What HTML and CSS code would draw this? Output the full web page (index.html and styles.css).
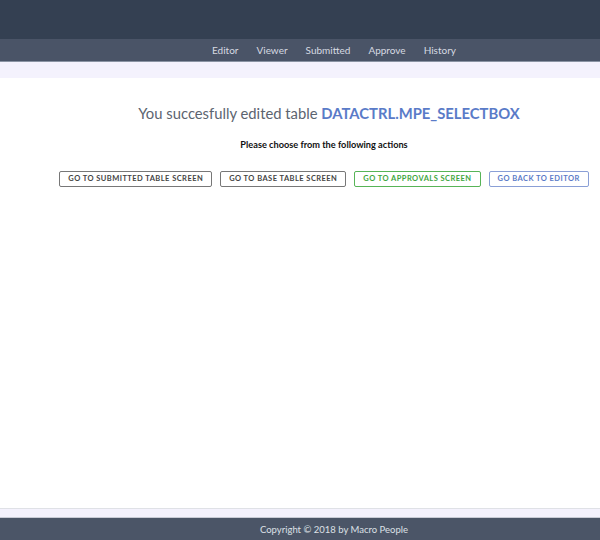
FILE: index.html
```html
<!DOCTYPE html>
<html>
<head>
<meta charset="utf-8">
<link rel="stylesheet" href="styles.css">
</head>
<body>
<div class="page">
  <header class="top"></header>
  <nav class="nav">
    <a>Editor</a><a>Viewer</a><a>Submitted</a><a>Approve</a><a>History</a>
  </nav>
  <div class="band"></div>
  <main class="main">
    <h1 class="title">You succesfully edited table <span class="tbl">DATACTRL.MPE_SELECTBOX</span></h1>
    <p class="sub">Please choose from the following actions</p>
    <div class="actions">
      <button class="btn">GO TO SUBMITTED TABLE SCREEN</button>
      <button class="btn">GO TO BASE TABLE SCREEN</button>
      <button class="btn green">GO TO APPROVALS SCREEN</button>
      <button class="btn blue">GO BACK TO EDITOR</button>
    </div>
  </main>
  <div class="fband"></div>
  <footer class="footer">Copyright © 2018 by Macro People</footer>
</div>
</body>
</html>
```
FILE: styles.css
```css
html, body { margin: 0; padding: 0; }
body { font-family: Lato, "Open Sans", sans-serif; background: #fff; }
.page { display: flex; flex-direction: column; height: 540px; }
.top { height: 39px; background: #344052; }
.nav { height: 22px; background: #4a5467; border-bottom: 1px solid #8a93a3; display: flex; justify-content: center; align-items: center; gap: 0; padding-left: 68px; }
.nav a { color: #d6dae2; font-size: 10px; margin: 0 9px; }
.band { height: 16px; background: #f4f2fd; }
.main { flex: 1; padding-left: 58px; padding-right: 10px; text-align: center; }
.title { margin: 25px 0 0; padding-left: 10px; font-size: 14.8px; font-weight: 400; color: #5c6470; line-height: 20px; }
.tbl { color: #5a7bc8; font-weight: 700; }
.sub { margin: 16px 0 0; font-size: 9.2px; font-weight: 700; color: #111; line-height: 12px; }
.actions { display: flex; justify-content: center; gap: 8px; margin-top: 20px; }
.btn { flex-shrink: 0; white-space: nowrap; font-family: Lato, sans-serif; font-size: 7.5px; font-weight: 700; letter-spacing: 0.45px; color: #444; background: #fff; border: 1px solid #777; border-radius: 2px; height: 16px; padding: 0 8px; line-height: 14px; }
.btn.green { color: #3ea63e; border-color: #57b457; }
.btn.blue { color: #5b7bc7; border-color: #8a9fd6; }
.fband { height: 8px; background: #f4f2fd; border-top: 1px solid #dfe1e6; border-bottom: 1px solid #c9ccd6; }
.footer { height: 22px; background: #4b5567; color: #dde0e6; font-size: 9.5px; display: flex; align-items: center; justify-content: center; padding-left: 68px; }
```
